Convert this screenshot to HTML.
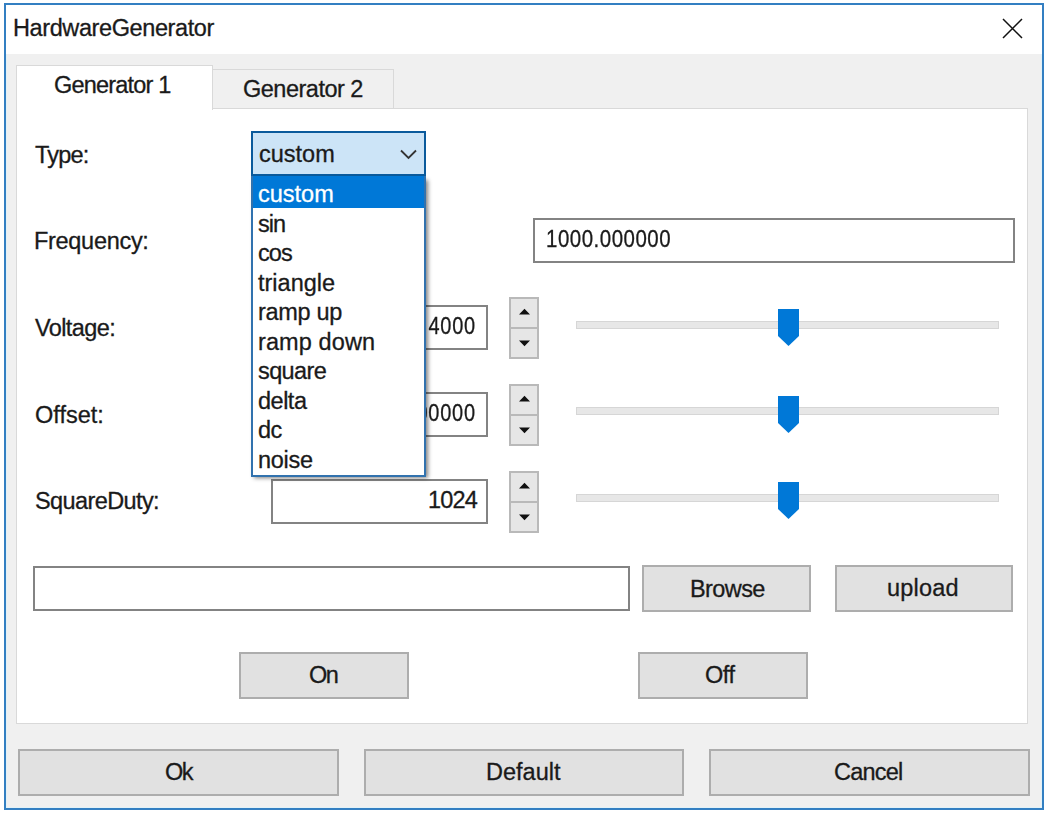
<!DOCTYPE html>
<html><head><meta charset="utf-8">
<style>
html,body{margin:0;padding:0;}
body{width:1047px;height:813px;position:relative;overflow:hidden;background:#fff;font-family:"Liberation Sans",sans-serif;color:#000;}
.a{position:absolute;box-sizing:border-box;}
.t{position:absolute;white-space:nowrap;font-size:23.5px;line-height:23.5px;color:#1a1a1a;letter-spacing:-0.4px;-webkit-text-stroke:0.3px currentColor;}
.win{left:4px;top:3px;width:1040px;height:807px;border:2px solid #337fc2;background:#f0f0f0;box-shadow:inset 0 0 0 1px #e2f2f8;}
.title{left:6px;top:5px;width:1036px;height:49px;background:#fff;}
.tab2{left:212px;top:69px;width:182px;height:40px;background:#f0f0f0;border:1px solid #d9d9d9;border-bottom:none;}
.pane{left:16px;top:108px;width:1012px;height:616px;background:#fff;border:1px solid #d9d9d9;}
.tab1{left:16px;top:65px;width:197px;height:45px;background:#fff;border:1px solid #d9d9d9;border-bottom:none;}
.inp{background:#fff;border:2px solid #838383;}
.btn{background:#e1e1e1;border:2px solid #adadad;}
.spin{left:509px;width:30px;height:62px;background:#e6e6e6;border:2px solid #b9b9b9;}
.spin .mid{position:absolute;left:0;right:0;top:27.5px;height:2.5px;background:#b9b9b9;}
.groove{left:576px;width:423px;height:7.5px;background:#e7e7e7;border:1px solid #d6d6d6;}
</style></head><body>
<div class="a win"></div>
<div class="a title"></div>

<div class="t" style="top:17.11px;left:13px;">HardwareGenerator</div>
<svg class="a" style="left:1000px;top:16px;" width="25" height="25" viewBox="0 0 25 25"><path d="M3 3 L22 22 M22 3 L3 22" stroke="#111" stroke-width="1.5" fill="none"/></svg>
<div class="a tab2"></div><div class="a pane"></div><div class="a tab1"></div>
<div class="t" style="top:74.11px;left:54px;letter-spacing:-0.8px;">Generator 1</div>
<div class="t" style="top:78.11px;left:243px;letter-spacing:-0.5px;">Generator 2</div>
<div class="t" style="top:143.61px;left:35px;letter-spacing:-0.8px;">Type:</div>
<div class="t" style="top:230.11px;left:34px;letter-spacing:-0.3px;">Frequency:</div>
<div class="t" style="top:316.81px;left:35px;letter-spacing:-0.6px;">Voltage:</div>
<div class="t" style="top:404.11px;left:35px;letter-spacing:0px;">Offset:</div>
<div class="t" style="top:490.11px;left:35px;letter-spacing:-0.6px;">SquareDuty:</div>
<div class="a inp" style="left:533px;top:218px;width:482px;height:45px;"></div>
<div class="t" style="top:228.11px;left:546px;letter-spacing:0.6px;transform:scaleX(0.87);transform-origin:0 50%;">1000.000000</div>
<div class="a inp" style="left:271px;top:305px;width:217px;height:45px;"></div>
<div class="t" style="top:315.11px;right:571px;letter-spacing:0.9px;transform:scaleX(0.85);transform-origin:100% 50%;">4000</div>
<div class="a spin" style="top:297px;"><div class="mid"></div></div>
<svg class="a" style="left:510px;top:297px;" width="29" height="62" viewBox="0 0 29 62"><path d="M9 17.5 L14.5 11.8 L20 17.5 Z M9 43.6 L14.5 49.3 L20 43.6 Z" fill="#111"/></svg>
<div class="a groove" style="top:321px;"></div>
<svg class="a" style="left:777px;top:309px;" width="23" height="38" viewBox="0 0 23 38"><path d="M1 0 H22 V27 L11.5 37 L1 27 Z" fill="#0078d7"/></svg>
<div class="a inp" style="left:271px;top:392px;width:217px;height:45px;"></div>
<div class="t" style="top:402.11px;right:571px;letter-spacing:0.9px;transform:scaleX(0.85);transform-origin:100% 50%;">00000</div>
<div class="a spin" style="top:384px;"><div class="mid"></div></div>
<svg class="a" style="left:510px;top:384px;" width="29" height="62" viewBox="0 0 29 62"><path d="M9 17.5 L14.5 11.8 L20 17.5 Z M9 43.6 L14.5 49.3 L20 43.6 Z" fill="#111"/></svg>
<div class="a groove" style="top:407px;"></div>
<svg class="a" style="left:777px;top:396px;" width="23" height="38" viewBox="0 0 23 38"><path d="M1 0 H22 V27 L11.5 37 L1 27 Z" fill="#0078d7"/></svg>
<div class="a inp" style="left:271px;top:479px;width:217px;height:45px;"></div>
<div class="t" style="top:489.11px;right:570px;letter-spacing:-0.8px;">1024</div>
<div class="a spin" style="top:471px;"><div class="mid"></div></div>
<svg class="a" style="left:510px;top:471px;" width="29" height="62" viewBox="0 0 29 62"><path d="M9 17.5 L14.5 11.8 L20 17.5 Z M9 43.6 L14.5 49.3 L20 43.6 Z" fill="#111"/></svg>
<div class="a groove" style="top:494px;"></div>
<svg class="a" style="left:777px;top:482px;" width="23" height="38" viewBox="0 0 23 38"><path d="M1 0 H22 V27 L11.5 37 L1 27 Z" fill="#0078d7"/></svg>
<div class="a inp" style="left:33px;top:566px;width:597px;height:45px;"></div>
<div class="a btn" style="left:642px;top:565px;width:169px;height:47px;"></div>
<div class="t" style="top:577.61px;left:690px;letter-spacing:-0.6px;">Browse</div>
<div class="a btn" style="left:835px;top:565px;width:178px;height:47px;"></div>
<div class="t" style="top:577.11px;left:887px;letter-spacing:0.2px;">upload</div>
<div class="a btn" style="left:239px;top:652px;width:170px;height:47px;"></div>
<div class="t" style="top:664.11px;left:309px;letter-spacing:-1.5px;">On</div>
<div class="a btn" style="left:638px;top:652px;width:170px;height:47px;"></div>
<div class="t" style="top:664.11px;left:705px;letter-spacing:-0.5px;">Off</div>
<div class="a btn" style="left:18px;top:749px;width:321px;height:47px;"></div>
<div class="t" style="top:761.11px;left:165px;letter-spacing:-1.5px;">Ok</div>
<div class="a btn" style="left:364px;top:749px;width:320px;height:47px;"></div>
<div class="t" style="top:761.11px;left:486px;letter-spacing:0px;">Default</div>
<div class="a btn" style="left:709px;top:749px;width:321px;height:47px;"></div>
<div class="t" style="top:761.11px;left:834px;letter-spacing:-0.8px;">Cancel</div>
<div class="a" style="left:251px;top:131px;width:175px;height:45px;background:#cce4f7;border:2px solid #0a5a9c;"></div>
<div class="t" style="top:143.11px;left:259px;letter-spacing:0px;">custom</div>
<svg class="a" style="left:398px;top:146px;" width="22" height="16" viewBox="0 0 22 16"><path d="M3 4.5 L10.5 12 L18 4.5" stroke="#333" stroke-width="1.8" fill="none"/></svg>
<div class="a" style="left:254px;top:180px;width:174px;height:298px;background:rgba(0,0,0,0.5);filter:blur(2px);"></div>
<div class="a" style="left:251px;top:176px;width:175px;height:301px;background:#fff;border:2px solid #3172ae;border-top:none;"></div>
<div class="a" style="left:253px;top:176px;width:171px;height:32px;background:#0078d7;"></div>
<div class="t" style="top:183.11px;left:258px;letter-spacing:0px;color:#fff;">custom</div>
<div class="t" style="top:212.61px;left:258px;letter-spacing:-1.0px;">sin</div>
<div class="t" style="top:242.11px;left:258px;letter-spacing:-0.9px;">cos</div>
<div class="t" style="top:271.61px;left:258px;letter-spacing:0px;">triangle</div>
<div class="t" style="top:301.11px;left:258px;letter-spacing:-0.3px;">ramp up</div>
<div class="t" style="top:330.61px;left:258px;letter-spacing:0.1px;">ramp down</div>
<div class="t" style="top:360.11px;left:258px;letter-spacing:-0.6px;">square</div>
<div class="t" style="top:389.61px;left:258px;letter-spacing:-0.5px;">delta</div>
<div class="t" style="top:419.11px;left:258px;letter-spacing:-0.5px;">dc</div>
<div class="t" style="top:448.61px;left:258px;letter-spacing:-0.3px;">noise</div>
</body></html>
